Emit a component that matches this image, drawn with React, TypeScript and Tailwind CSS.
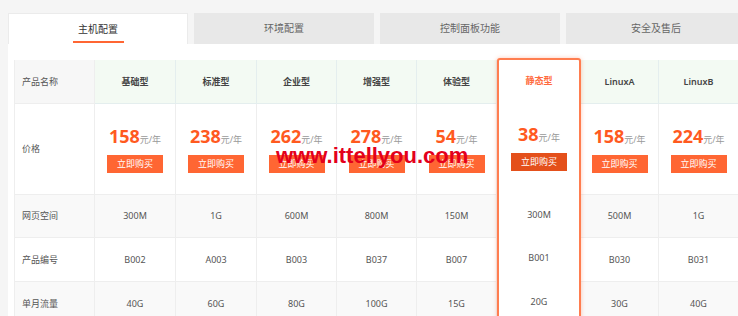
import React from "react";

type Plan = {
  name: string;
  price: number;
  space: string;
  code: string;
  traffic: string;
  width: string;
  hot?: boolean;
};

const plans: Plan[] = [
  { name: "基础型", price: 158, space: "300M", code: "B002", traffic: "40G", width: "w-[81px]" },
  { name: "标准型", price: 238, space: "1G", code: "A003", traffic: "60G", width: "w-[81px]" },
  { name: "企业型", price: 262, space: "600M", code: "B003", traffic: "80G", width: "w-[80px]" },
  { name: "增强型", price: 278, space: "800M", code: "B037", traffic: "100G", width: "w-[80px]" },
  { name: "体验型", price: 54, space: "150M", code: "B007", traffic: "15G", width: "w-[80px]" },
  { name: "静态型", price: 38, space: "300M", code: "B001", traffic: "20G", width: "w-[84px]", hot: true },
  { name: "LinuxA", price: 158, space: "500M", code: "B030", traffic: "30G", width: "w-[78px]" },
  { name: "LinuxB", price: 224, space: "1G", code: "B031", traffic: "40G", width: "w-[80px]" },
];

const tabs = ["主机配置", "环境配置", "控制面板功能", "安全及售后"];

function Price({ plan }: { plan: Plan }) {
  return (
    <div className="flex flex-col items-center pt-[19px]">
      <div className="flex h-[26px] items-baseline leading-[26px]">
        <span className="text-[18px] font-bold text-[#ff5a1f]">{plan.price}</span>
        <span className="text-[9px] text-[#999]">元/年</span>
      </div>
      <button
        className={`mt-[6px] h-[18px] w-[56px] text-[9px] leading-[18px] text-white ${
          plan.hot ? "bg-[#e4501b]" : "bg-[#ff6633]"
        }`}
      >
        立即购买
      </button>
    </div>
  );
}

function PlanColumn({ plan }: { plan: Plan }) {
  if (plan.hot) {
    return (
      <div
        className={`${plan.width} relative z-10 -mt-[2px] shrink-0 rounded-[3px] border-2 border-[#ff7d4f] bg-white shadow-[0_0_4px_rgba(255,100,50,0.35)]`}
      >
        <div className="flex h-[42px] items-center justify-center text-[9px] font-semibold text-[#ff6a3d]">
          {plan.name}
        </div>
        <div className="h-[91px]">
          <Price plan={plan} />
        </div>
        <div className="flex h-[43px] items-center justify-center text-[9px] text-[#555]">{plan.space}</div>
        <div className="flex h-[44px] items-center justify-center text-[9px] text-[#555]">{plan.code}</div>
        <div className="flex h-[44px] items-center justify-center text-[9px] text-[#555]">{plan.traffic}</div>
      </div>
    );
  }
  return (
    <div className={`${plan.width} shrink-0`}>
      <div className="flex h-[44px] items-center justify-center border-r border-b border-[#e4eeee] bg-[#f3faf3] text-[9px] font-semibold text-[#444]">
        {plan.name}
      </div>
      <div className="h-[91px] border-r border-b border-[#eeeeee] bg-white">
        <Price plan={plan} />
      </div>
      <div className="flex h-[43px] items-center justify-center border-r border-b border-[#eeeeee] bg-[#f9f9f9] text-[9px] text-[#555]">
        {plan.space}
      </div>
      <div className="flex h-[44px] items-center justify-center border-r border-b border-[#eeeeee] bg-white text-[9px] text-[#555]">
        {plan.code}
      </div>
      <div className="flex h-[44px] items-center justify-center border-r border-b border-[#eeeeee] bg-[#f9f9f9] text-[9px] text-[#555]">
        {plan.traffic}
      </div>
    </div>
  );
}

export default function App() {
  return (
    <div className="h-[316px] w-[738px] overflow-hidden bg-[#f5f5f5] pt-[13px] pl-2 font-['Noto_Sans','Noto_Sans_CJK_SC',sans-serif]">
      {/* TABS */}
      <div className="flex gap-[6px]">
        {tabs.map((t, i) =>
          i === 0 ? (
            <div
              key={t}
              className="relative flex h-[31px] w-[180px] shrink-0 items-center justify-center border border-b-0 border-[#ebebeb] bg-white text-[10px] text-[#333]"
            >
              {t}
              <span className="absolute bottom-[1px] left-[64px] h-[2px] w-[51px] bg-[#ff6633]"></span>
            </div>
          ) : (
            <div
              key={t}
              className="flex h-[31px] w-[180px] shrink-0 items-center justify-center bg-[#e8e8e8] text-[10px] text-[#666]"
            >
              {t}
            </div>
          )
        )}
      </div>

      {/* PANEL */}
      <div className="relative h-[272px] bg-white pt-4 pl-[6px]">
        <div className="flex">
          <div className="w-[81px] shrink-0 border-l border-[#eeeeee] text-[9px] text-[#555]">
            <div className="flex h-[44px] items-center border-r border-b border-[#eeeeee] bg-[#f7f7f7] pl-[7px]">产品名称</div>
            <div className="flex h-[91px] items-center border-r border-b border-[#eeeeee] bg-white pl-[7px]">价格</div>
            <div className="flex h-[43px] items-center border-r border-b border-[#eeeeee] bg-[#f9f9f9] pl-[7px]">网页空间</div>
            <div className="flex h-[44px] items-center border-r border-b border-[#eeeeee] bg-white pl-[7px]">产品编号</div>
            <div className="flex h-[44px] items-center border-r border-b border-[#eeeeee] bg-[#f9f9f9] pl-[7px]">单月流量</div>
          </div>
          {plans.map((p) => (
            <PlanColumn key={p.name} plan={p} />
          ))}
        </div>

        {/* watermark */}
        <div className="pointer-events-none absolute left-[268px] top-[101px] z-20 font-['Liberation_Sans',Arial,sans-serif] text-[22px] leading-[22px] font-bold text-[#e3001b]">
          www.ittellyou.com
        </div>
      </div>
    </div>
  );
}
